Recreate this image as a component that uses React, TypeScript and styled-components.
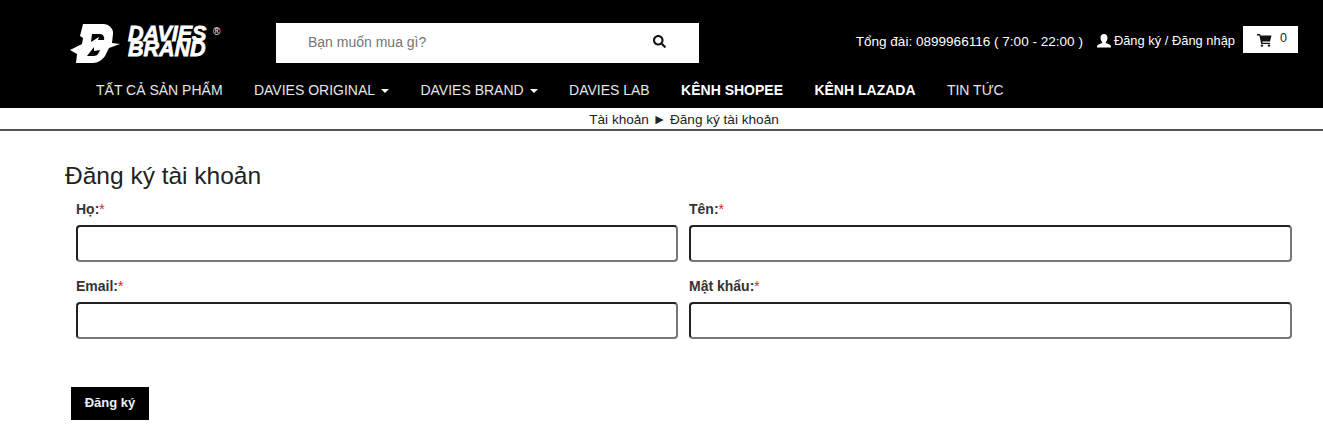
import React from 'react';
import styled, { createGlobalStyle } from 'styled-components';
import { FaSearch } from 'react-icons/fa';

const GlobalStyle = createGlobalStyle`
  html, body {
    margin: 0;
    padding: 0;
    background: #fff;
    font-family: 'Liberation Sans', Arial, sans-serif;
    color: #222;
  }
  * {
    box-sizing: border-box;
  }
`;

const Logo = () => (
  <LogoWrap>
    <svg width="51" height="41" viewBox="0 0 51 41">
      <path
        fill="#fff"
        d="M13 1 L33 1 C39 1 44 6 43 11 L42 20 L50 21 L39 25 L35 33 C32 37 28 40 23 40 L6 40 L7 31 L0 27 L12 21 L13 15 L10 13 Z"
      />
      <path fill="#000" d="M22 11 L30 11 C33 11 35 14 34 17 L28 17 L29 14 L21 19 Z" />
      <path fill="#000" d="M17 33 L24 33 C27 33 29 30 30 27 L24 28 L24 24 Z" />
    </svg>
    <LogoText>DAVIES BRAND</LogoText>
    <LogoMark>®</LogoMark>
  </LogoWrap>
);

const UserIcon = () => (
  <svg width="14" height="14" viewBox="0 0 14 14">
    <path
      fill="#fff"
      d="M7 0 C9.4 0 10.5 1.8 10.5 4 C10.5 5.8 9.7 7.2 8.8 8 L8.8 9 C10.5 9.8 13.4 10.3 14 12 L14 13.5 L0 13.5 L0 12 C0.6 10.3 3.5 9.8 5.2 9 L5.2 8 C4.3 7.2 3.5 5.8 3.5 4 C3.5 1.8 4.6 0 7 0 Z"
    />
  </svg>
);

const CartIcon = () => (
  <svg width="15" height="14" viewBox="0 0 15 14">
    <path
      fill="#111"
      d="M0 1 L3 1 L3.6 2.5 L14.5 2.5 L13 8.5 L5.2 8.5 L5.5 9.8 L13 9.8 L13 11 L4.2 11 L2.4 2.4 L0 2.4 Z"
    />
    <circle cx="5" cy="12.6" r="1.2" fill="#111" />
    <circle cx="12" cy="12.6" r="1.2" fill="#111" />
  </svg>
);

const Caret = styled.span`
  display: inline-block;
  width: 0;
  height: 0;
  margin-left: 6px;
  vertical-align: middle;
  border-top: 4px solid #fff;
  border-left: 4px solid transparent;
  border-right: 4px solid transparent;
`;

const navItems = [
  { label: 'TẤT CẢ SẢN PHẨM' },
  { label: 'DAVIES ORIGINAL', caret: true },
  { label: 'DAVIES BRAND', caret: true },
  { label: 'DAVIES LAB' },
  { label: 'KÊNH SHOPEE', bold: true },
  { label: 'KÊNH LAZADA', bold: true },
  { label: 'TIN TỨC' },
];

const fields = ['Họ:', 'Tên:', 'Email:', 'Mật khẩu:'];

const App: React.FC = () => {
  return (
    <>
      <GlobalStyle />
      <Header>
        <TopRow>
          <Logo />
          <SearchBox>
            <SearchInput placeholder="Bạn muốn mua gì?" />
            <FaSearch size={13} color="#111" />
          </SearchBox>
          <TopRight>
            <Hotline>Tổng đài: 0899966116 ( 7:00 - 22:00 )</Hotline>
            <Account>
              <UserIcon />
              Đăng ký / Đăng nhập
            </Account>
            <Cart>
              <CartIcon />
              <CartCount>0</CartCount>
            </Cart>
          </TopRight>
        </TopRow>
        <Nav>
          {navItems.map((item) => (
            <NavItem key={item.label} $bold={item.bold}>
              {item.label}
              {item.caret && <Caret />}
            </NavItem>
          ))}
        </Nav>
      </Header>

      <Breadcrumb>Tài khoản ► Đăng ký tài khoản</Breadcrumb>

      <Main>
        <Title>Đăng ký tài khoản</Title>
        <FormGrid>
          {fields.map((field) => (
            <Field key={field}>
              <Label>
                {field}
                <Required>*</Required>
              </Label>
              <Input />
            </Field>
          ))}
        </FormGrid>
        <SubmitButton>Đăng ký</SubmitButton>
      </Main>
    </>
  );
};

const Header = styled.header`
  height: 108px;
  background-color: #000;
  color: #fff;
`;

const TopRow = styled.div`
  display: flex;
  align-items: flex-start;
  height: 80px;
  padding: 23px 25px 0 70px;
`;

const LogoWrap = styled.div`
  position: relative;
  display: flex;
  align-items: center;
  width: 206px;
  height: 40px;
  gap: 7px;
`;

const LogoText = styled.div`
  width: 84px;
  margin-top: -2px;
  font-size: 21.5px;
  font-weight: 700;
  font-style: italic;
  line-height: 15.5px;
  color: #fff;
  -webkit-text-stroke: 0.8px #fff;
`;

const LogoMark = styled.span`
  position: absolute;
  top: 3px;
  left: 143px;
  font-size: 10px;
  line-height: 11px;
  color: #fff;
`;

const SearchBox = styled.div`
  display: flex;
  align-items: center;
  width: 423px;
  height: 40px;
  padding: 0 33px 3px 32px;
  background: #fff;
`;

const SearchInput = styled.input`
  flex: 1;
  min-width: 0;
  border: none;
  outline: none;
  padding: 0;
  font-family: inherit;
  font-size: 14px;
  background: transparent;

  &::placeholder {
    color: #757575;
    opacity: 1;
  }
`;

const TopRight = styled.div`
  display: flex;
  align-items: flex-start;
  margin-left: auto;
  height: 30px;
  margin-top: 3px;
`;

const Hotline = styled.span`
  margin-top: 8px;
  font-size: 13.55px;
  color: #fff;
`;

const Account = styled.span`
  display: flex;
  align-items: center;
  gap: 3px;
  margin: 7px 8px 0 14px;
  font-size: 12.9px;
  line-height: 15px;
  color: #fff;
`;

const Cart = styled.div`
  display: flex;
  align-items: flex-start;
  justify-content: space-between;
  width: 55px;
  height: 27px;
  padding: 7px 11px 0 14px;
  background: #fff;
`;

const CartCount = styled.span`
  margin-top: -2px;
  font-size: 12.5px;
  color: #222;
`;

const Nav = styled.nav`
  display: flex;
  gap: 31.4px;
  padding-left: 96px;
`;

const NavItem = styled.a<{ $bold?: boolean }>`
  font-size: 14px;
  line-height: 20px;
  font-weight: ${(p) => (p.$bold ? 700 : 400)};
  color: ${(p) => (p.$bold ? '#fff' : '#e6e6e6')};
  white-space: nowrap;
`;

const Breadcrumb = styled.div`
  height: 23px;
  padding: 3px 0 0 45px;
  text-align: center;
  font-size: 13.6px;
  line-height: 17px;
  color: #222;
  border-bottom: 2px solid #555;
`;

const Main = styled.main`
  padding: 30px 31px 0 65px;
`;

const Title = styled.h1`
  margin: 0 0 10px;
  font-size: 24.5px;
  font-weight: 400;
  line-height: 30px;
  color: #222;
`;

const FormGrid = styled.div`
  display: grid;
  grid-template-columns: 602px 603px;
  column-gap: 11px;
  row-gap: 16px;
  padding-left: 11px;
`;

const Field = styled.div`
  display: flex;
  flex-direction: column;
`;

const Label = styled.label`
  height: 24px;
  font-size: 14px;
  font-weight: 700;
  line-height: 17px;
  color: #333;
`;

const Required = styled.span`
  font-weight: 400;
  color: #e0222a;
`;

const Input = styled.input`
  height: 37px;
  border: 2px solid #222;
  border-bottom-color: #777;
  border-right-color: #777;
  border-radius: 4px;
  background: #fff;
  outline: none;
`;

const SubmitButton = styled.button`
  display: block;
  width: 78px;
  height: 33px;
  margin: 48px 0 0 6px;
  padding: 0 0 2px;
  border: none;
  background: #000;
  color: #f0f0f0;
  font-family: inherit;
  font-size: 13px;
  font-weight: 700;
`;

export default App;
